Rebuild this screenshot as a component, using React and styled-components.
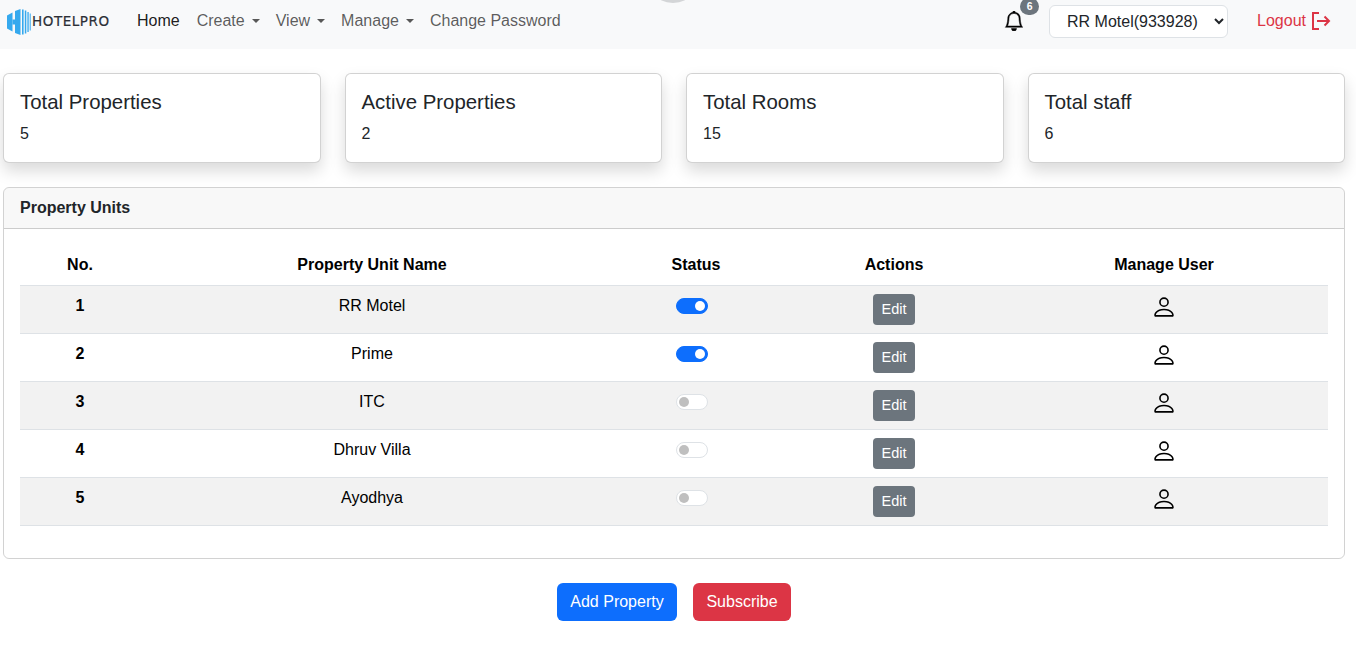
import React from 'react';
import styled, { createGlobalStyle } from 'styled-components';
import { BsBell, BsPerson } from 'react-icons/bs';

const GlobalStyle = createGlobalStyle`
  html, body {
    margin: 0;
    padding: 0;
    background: #fff;
    font-family: "Liberation Sans", Arial, sans-serif;
    color: #212529;
  }
  * { box-sizing: border-box; }
`;

const stats = [
  { title: 'Total Properties', value: 5 },
  { title: 'Active Properties', value: 2 },
  { title: 'Total Rooms', value: 15 },
  { title: 'Total staff', value: 6 },
];

const units = [
  { id: 1, name: 'RR Motel', active: true },
  { id: 2, name: 'Prime', active: true },
  { id: 3, name: 'ITC', active: false },
  { id: 4, name: 'Dhruv Villa', active: false },
  { id: 5, name: 'Ayodhya', active: false },
];

const App = () => (
  <>
    <GlobalStyle />
    <Navbar>
      <TopBlob />
      <Brand>
        <BrandIcon width="24" height="26" viewBox="0 0 24 26" fill="#35a9ee">
          <path d="M0 6.500L5.500 3.500v19L0 19.500z" />
          <path d="M5.500 10.500h3v5h-3z" />
          <path d="M8 2L13.500 0v26L8 24z" />
          <rect x="15" y="0.500" width="1.600" height="25" />
          <rect x="17.800" y="1.500" width="1.500" height="23" />
          <rect x="20.400" y="3" width="1.300" height="20" />
          <rect x="22.700" y="4.500" width="1" height="17" />
        </BrandIcon>
        <BrandName>HOTELPRO</BrandName>
      </Brand>
      <NavLinks>
        <HomeLink $active>Home</HomeLink>
        <NavLink $caret>Create</NavLink>
        <NavLink $caret>View</NavLink>
        <NavLink $caret>Manage</NavLink>
        <NavLink>Change Password</NavLink>
      </NavLinks>
      <NavRight>
        <BellWrap>
          <BsBell size={20} stroke="currentColor" strokeWidth="0.4" />
          <BellBadge>6</BellBadge>
        </BellWrap>
        <MotelSelect defaultValue="933928">
          <option value="933928">RR Motel(933928)</option>
        </MotelSelect>
        <Logout>
          Logout
          <svg width="20" height="18" viewBox="0 0 20 18" fill="none" stroke="currentColor" strokeWidth="2">
            <path d="M8 1H2v16h6" />
            <path d="M6 9h12M13.500 4.500L18 9l-4.500 4.500" />
          </svg>
        </Logout>
      </NavRight>
    </Navbar>

    <Stats>
      {stats.map((s) => (
        <StatCard key={s.title}>
          <StatTitle>{s.title}</StatTitle>
          <StatValue>{s.value}</StatValue>
        </StatCard>
      ))}
    </Stats>

    <Panel>
      <PanelHeader>Property Units</PanelHeader>
      <PanelBody>
        <Table>
          <colgroup>
            <col width="120" />
            <col width="464" />
            <col width="184" />
            <col width="212" />
            <col width="328" />
          </colgroup>
          <thead>
            <tr>
              <Th>No.</Th>
              <Th>Property Unit Name</Th>
              <Th>Status</Th>
              <Th>Actions</Th>
              <Th>Manage User</Th>
            </tr>
          </thead>
          <tbody>
            {units.map((u) => (
              <Row key={u.id}>
                <IdCell>{u.id}</IdCell>
                <Td>{u.name}</Td>
                <Td>
                  <Toggle $on={u.active} />
                </Td>
                <ButtonCell>
                  <EditButton>Edit</EditButton>
                </ButtonCell>
                <ButtonCell>
                  <BsPerson size={26} />
                </ButtonCell>
              </Row>
            ))}
          </tbody>
        </Table>
      </PanelBody>
    </Panel>

    <Actions>
      <ActionButton $bg="#0d6efd" $width="120px">Add Property</ActionButton>
      <ActionButton $bg="#dc3545" $width="98px">Subscribe</ActionButton>
    </Actions>
  </>
);

const Navbar = styled.nav`
  position: relative;
  display: flex;
  align-items: center;
  height: 49px;
  padding: 0 25px 7px 7px;
  background: #f8f9fa;
  overflow: hidden;
`;

const TopBlob = styled.div`
  position: absolute;
  top: -14px;
  left: 657px;
  width: 32px;
  height: 17px;
  border-radius: 50%;
  background: #d3d5d7;
`;

const Brand = styled.div`
  display: flex;
  align-items: center;
  width: 130px;
  flex: none;
`;

const BrandIcon = styled.svg`
  flex: none;
  margin-top: 2px;
`;

const BrandName = styled.span`
  margin-left: 1px;
  font-family: "DejaVu Sans", sans-serif;
  font-size: 13.500px;
  letter-spacing: 0.550px;
  color: #2b2f36;
  -webkit-text-stroke: 0.2px #2b2f36;
`;

const NavLinks = styled.div`
  display: flex;
  align-items: center;
  gap: 16px;
`;

const NavLink = styled.a`
  font-size: 16px;
  line-height: 24px;
  color: ${(p) => (p.$active ? 'rgba(0,0,0,.9)' : 'rgba(0,0,0,.65)')};
  &::after {
    content: '';
    display: ${(p) => (p.$caret ? 'inline-block' : 'none')};
    margin-left: 7px;
    vertical-align: 3px;
    border-top: 4.800px solid;
    border-right: 4.800px solid transparent;
    border-left: 4.800px solid transparent;
  }
`;

const HomeLink = styled(NavLink)`
  margin-right: 1px;
`;

const NavRight = styled.div`
  display: flex;
  align-items: center;
  margin-left: auto;
`;

const BellWrap = styled.div`
  position: relative;
  display: flex;
  margin-right: 25px;
  color: #000;
`;

const BellBadge = styled.span`
  position: absolute;
  top: -13px;
  left: 16px;
  width: 19px;
  height: 17px;
  border-radius: 9px;
  background: #6c757d;
  color: #fff;
  font-size: 10.500px;
  font-weight: 700;
  line-height: 17px;
  text-align: center;
`;

const MotelSelect = styled.select`
  width: 179px;
  height: 33px;
  padding: 0 4px 0 13px;
  border: 1px solid #dee2e6;
  border-radius: 6px;
  background: #fff;
  color: #212529;
  font-family: inherit;
  font-size: 16px;
`;

const Logout = styled.a`
  display: flex;
  align-items: center;
  gap: 5px;
  margin-left: 29px;
  color: #dc3545;
  font-size: 16px;
  line-height: 24px;
`;

const Stats = styled.section`
  display: grid;
  grid-template-columns: repeat(4, 1fr);
  gap: 24px;
  margin: 24px 11px 0 3px;
`;

const StatCard = styled.div`
  height: 90px;
  padding: 16px;
  background: #fff;
  border: 1px solid rgba(0, 0, 0, .175);
  border-radius: 6px;
  box-shadow: 0 8px 16px rgba(0, 0, 0, .15);
`;

const StatTitle = styled.h5`
  margin: 0 0 8px;
  font-size: 20.400px;
  font-weight: 400;
  line-height: 24px;
`;

const StatValue = styled.p`
  margin: 0;
  font-size: 16px;
  line-height: 24px;
`;

const Panel = styled.section`
  margin: 24px 11px 0 3px;
  height: 372px;
  border: 1px solid rgba(0, 0, 0, .175);
  border-radius: 6px;
`;

const PanelHeader = styled.div`
  height: 41px;
  padding: 0 16px;
  background: rgba(33, 37, 41, .03);
  border-bottom: 1px solid rgba(0, 0, 0, .175);
  border-radius: 5px 5px 0 0;
  font-size: 16px;
  font-weight: 700;
  line-height: 40px;
`;

const PanelBody = styled.div`
  padding: 16px;
`;

const Table = styled.table`
  width: 1308px;
  border-collapse: separate;
  border-spacing: 0;
  table-layout: fixed;
`;

const Th = styled.th`
  height: 40px;
  padding: 8px;
  border-bottom: 1px solid #dee2e6;
  color: #000;
  font-size: 16px;
  font-weight: 700;
  line-height: 24px;
  text-align: center;
`;

const Row = styled.tr`
  height: 48px;
  &:nth-child(odd) { background: #f2f2f2; }
`;

const Td = styled.td`
  height: 48px;
  padding: 8px 8px 15px;
  border-bottom: 1px solid #dee2e6;
  color: #000;
  font-size: 16px;
  line-height: 24px;
  text-align: center;
  vertical-align: top;
`;

const IdCell = styled(Td)`
  font-weight: 700;
`;

const ButtonCell = styled(Td)`
  padding: 8px 8px 0;
  line-height: 0;
`;

const Toggle = styled.span`
  position: relative;
  display: inline-block;
  width: 32px;
  height: 16px;
  margin: 4px 8px 0 0;
  border-radius: 8px;
  vertical-align: top;
  background: ${(p) => (p.$on ? '#0d6efd' : '#fff')};
  border: 1px solid ${(p) => (p.$on ? '#0d6efd' : '#dee2e6')};
  &::after {
    content: '';
    position: absolute;
    top: 2px;
    left: ${(p) => (p.$on ? '18px' : '2px')};
    width: 10px;
    height: 10px;
    border-radius: 50%;
    background: ${(p) => (p.$on ? '#fff' : '#bfbfbf')};
  }
`;

const EditButton = styled.button`
  width: 42px;
  height: 31px;
  padding: 0;
  border: 0;
  border-radius: 4px;
  background: #6c757d;
  color: #fff;
  font-family: inherit;
  font-size: 14.500px;
  line-height: 31px;
`;

const Actions = styled.div`
  display: flex;
  justify-content: center;
  gap: 16px;
  margin: 24px 0 0 -8px;
`;

const ActionButton = styled.button`
  height: 38px;
  width: ${(p) => p.$width};
  padding: 0;
  border: 0;
  border-radius: 6px;
  background: ${(p) => p.$bg};
  color: #fff;
  font-family: inherit;
  font-size: 16px;
`;

export default App;
